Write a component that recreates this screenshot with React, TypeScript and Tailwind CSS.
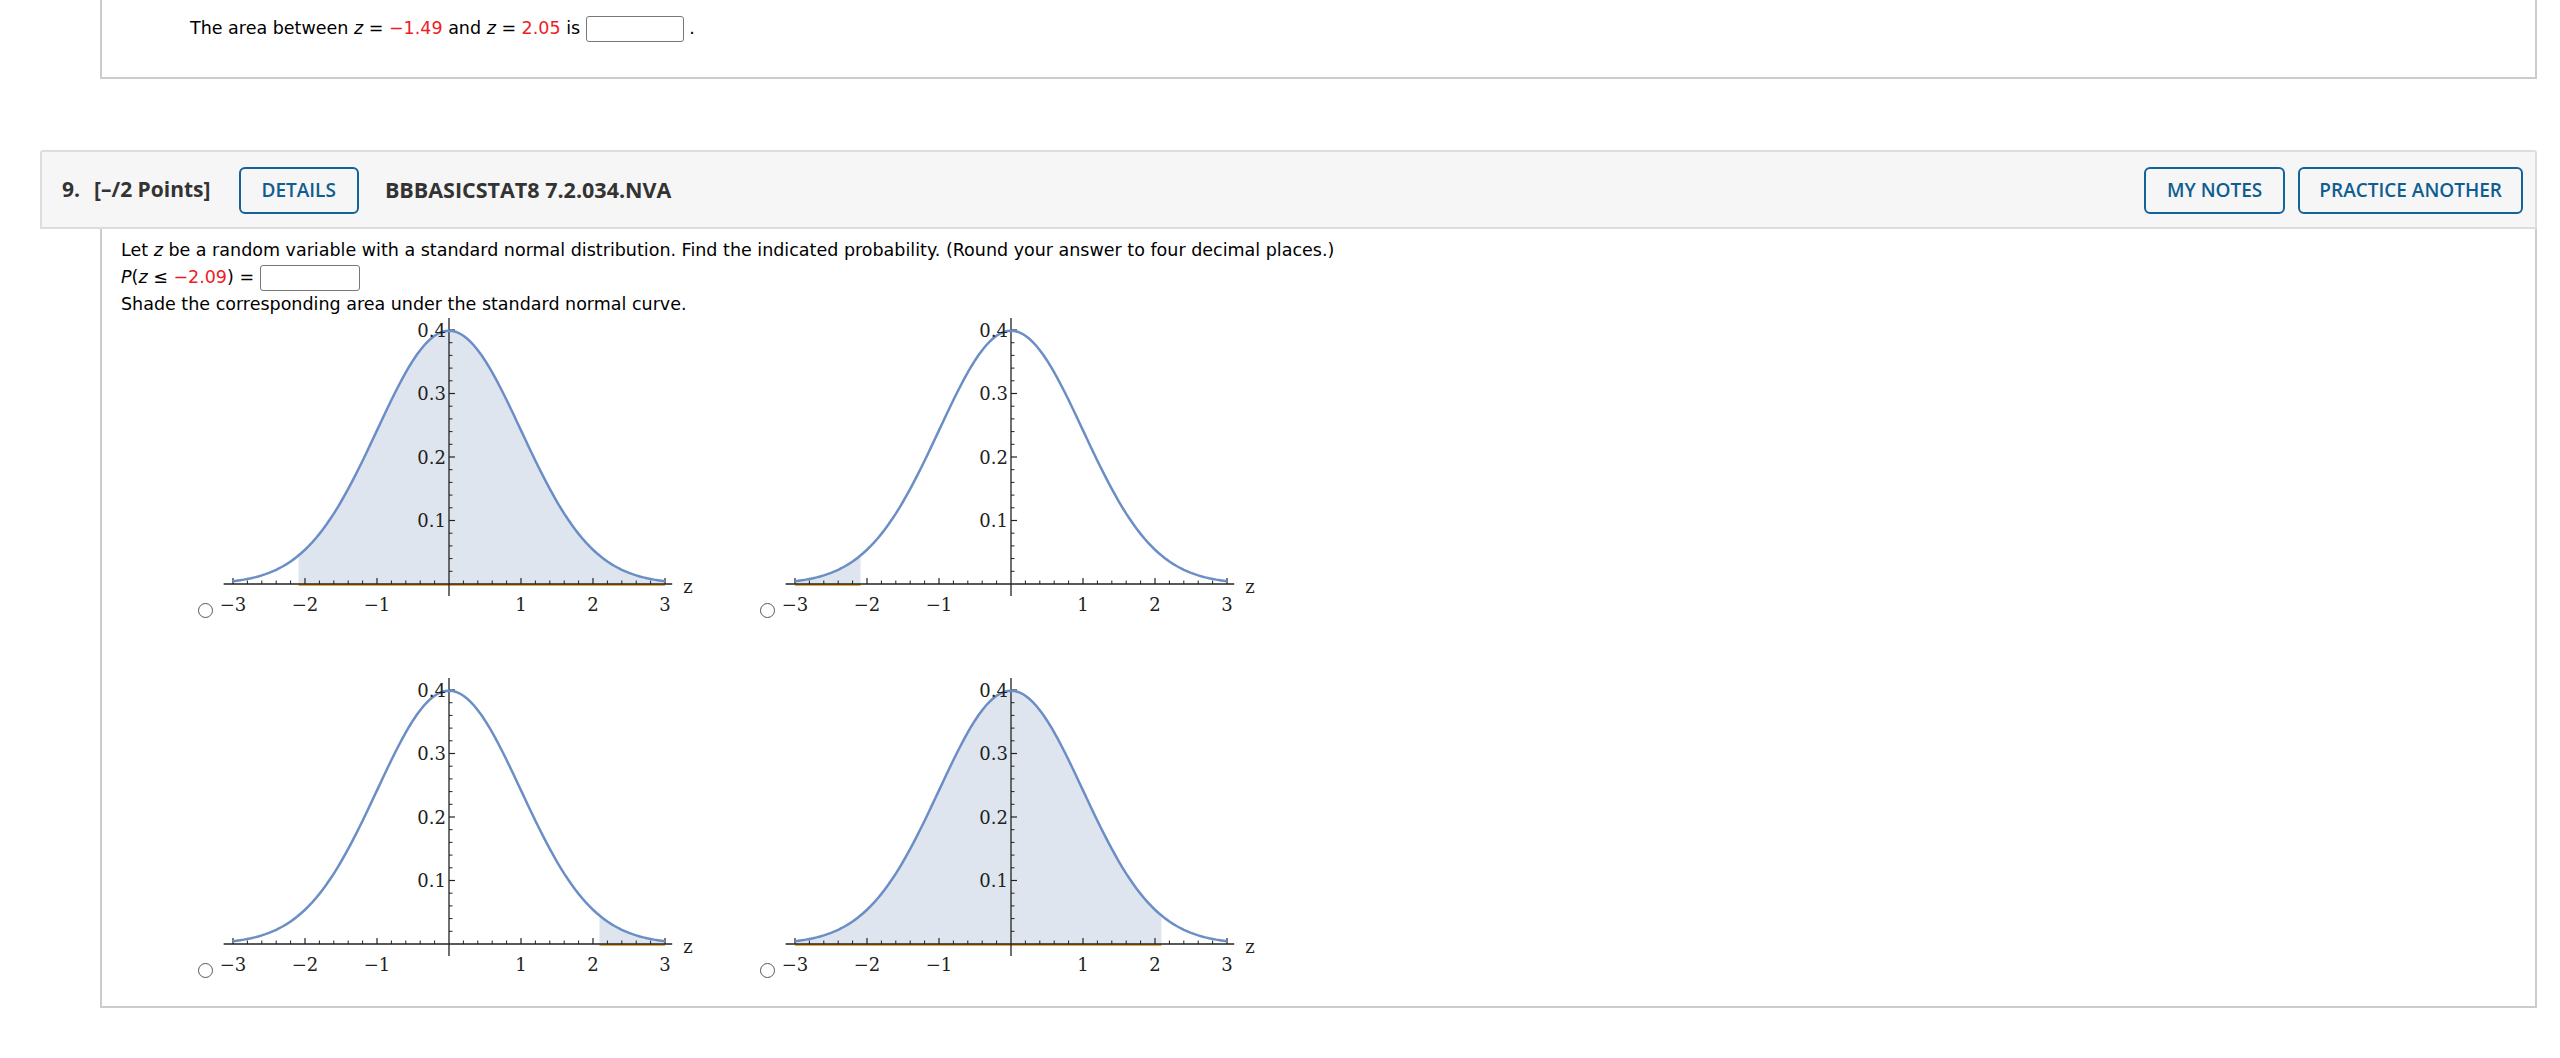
import React from 'react';

const UX = 72; // px per z unit
const UY = 635; // px per density unit (0.1 -> 63.5px)
const OX = 236;
const OY = 266;

function pdf(z: number) {
  return Math.exp((-z * z) / 2) / Math.sqrt(2 * Math.PI);
}

const px = (z: number) => OX + z * UX;
const py = (d: number) => OY - d * UY;

function curvePoints(a: number, b: number) {
  const pts: string[] = [];
  const n = 120;
  for (let i = 0; i <= n; i++) {
    const z = a + ((b - a) * i) / n;
    pts.push(`${px(z).toFixed(2)},${py(pdf(z)).toFixed(2)}`);
  }
  return pts;
}

function NormalChart({ from, to }: { from: number; to: number }) {
  const line = curvePoints(-3, 3);
  const area = curvePoints(from, to);
  const fillPath = `M${px(from)},${OY} L${area.join(' L')} L${px(to)},${OY} Z`;

  const xMinor: number[] = [];
  for (let i = -15; i <= 15; i++) {
    if (i % 5 !== 0) xMinor.push(i / 5);
  }
  const yMinor: number[] = [];
  for (let i = 1; i <= 21; i++) {
    if (i % 5 !== 0) yMinor.push(i / 50);
  }

  return (
    <svg width={520} height={320} className="block shrink-0">
      <path d={fillPath} fill="#dfe5ef" />
      {/* orange base under shaded part */}
      <line x1={px(from)} y1={OY + 1} x2={px(to)} y2={OY + 1} stroke="#e8a841" strokeWidth={2} />
      {/* x axis */}
      <line x1={px(-3.13)} y1={OY} x2={px(3.1)} y2={OY} stroke="#222" strokeWidth={1.3} />
      {[-3, -2, -1, 1, 2, 3].map((z) => (
        <line key={z} x1={px(z)} y1={OY} x2={px(z)} y2={OY - 6} stroke="#222" strokeWidth={1.2} />
      ))}
      {xMinor.map((z) => (
        <line key={z} x1={px(z)} y1={OY} x2={px(z)} y2={OY - 3.5} stroke="#222" strokeWidth={1} />
      ))}
      {/* y axis */}
      <line x1={OX} y1={OY - 266} x2={OX} y2={OY + 12} stroke="#222" strokeWidth={1.3} />
      {[0.1, 0.2, 0.3, 0.4].map((d) => (
        <line key={d} x1={OX} y1={py(d)} x2={OX + 6} y2={py(d)} stroke="#222" strokeWidth={1.2} />
      ))}
      {yMinor.map((d) => (
        <line key={d} x1={OX} y1={py(d)} x2={OX + 3.5} y2={py(d)} stroke="#222" strokeWidth={1} />
      ))}
      {/* curve */}
      <polyline points={line.join(' ')} fill="none" stroke="#6a8ec5" strokeWidth={2.5} />
      {/* labels */}
      <g fontFamily='"DejaVu Serif", "Liberation Serif", serif' fontSize={18} fill="#222">
        {[-3, -2, -1, 1, 2, 3].map((z) => (
          <text key={z} x={px(z)} y={OY + 27} textAnchor="middle">
            {z < 0 ? `\u2212${-z}` : z}
          </text>
        ))}
        {['0.1', '0.2', '0.3', '0.4'].map((t) => (
          <text key={t} x={OX - 3} y={py(parseFloat(t)) + 6.5} textAnchor="end">
            {t}
          </text>
        ))}
        <text x={px(3.32)} y={OY + 9} textAnchor="middle">
          z
        </text>
      </g>
    </svg>
  );
}

function Radio() {
  return (
    <span className="mb-[20px] inline-block h-[15px] w-[15px] shrink-0 rounded-full border-[1.5px] border-[#555555] bg-white" />
  );
}

function AnswerBox({ w }: { w: string }) {
  return (
    <span
      className={`inline-block h-[26px] ${w} rounded-[3px] border-[1.5px] border-[#777777] bg-white align-middle`}
    />
  );
}

const Red = ({ children }: { children: React.ReactNode }) => (
  <span className="text-[#ee1c25]">{children}</span>
);

export default function App() {
  const options = [
    { from: -2.09, to: 3 },
    { from: -3, to: -2.09 },
    { from: 2.09, to: 3 },
    { from: -3, to: 2.09 },
  ];

  return (
    <div className="min-h-screen bg-white text-[17.5px] leading-[27px] text-black [font-family:'DejaVu_Sans',Verdana,sans-serif]">
      {/* Previous question (scrolled) */}
      <div className="ml-[100px] mr-[23px] h-[79px] border-x-2 border-b-2 border-[#cccccc]">
        <p className="pl-[88px] pt-[15px]">
          The area between <i>z</i> = <Red>−1.49</Red> and <i>z</i> = <Red>2.05</Red> is{' '}
          <AnswerBox w="w-[98px]" /> .
        </p>
      </div>

      {/* Question 9 */}
      <div className="ml-[40px] mr-[23px] mt-[71px]">
        {/* Header */}
        <div className="flex h-[79px] items-center rounded-t-[3px] border-2 border-[#dddddd] bg-[#f6f6f6] pl-[20px] pr-[12px] [font-family:'Open_Sans',sans-serif]">
          <span className="text-[21px] font-bold text-[#333333]">9.</span>
          <span className="ml-[14px] text-[21px] font-bold text-[#333333]">[–/2 Points]</span>
          <button className="ml-[28px] mt-[2px] h-[47px] rounded-[6px] border-2 border-[#14629a] px-[21px] text-[19px] font-semibold text-[#0f5d91]">
            DETAILS
          </button>
          <span className="ml-[26px] text-[21.5px] font-bold text-[#333333]">BBBASICSTAT8 7.2.034.NVA</span>
          <div className="ml-auto mt-[2px] flex gap-[13px]">
            <button className="h-[47px] rounded-[6px] border-2 border-[#14629a] px-[21px] text-[19px] font-semibold text-[#0f5d91]">
              MY NOTES
            </button>
            <button className="h-[47px] rounded-[6px] border-2 border-[#14629a] px-[19px] text-[19px] font-semibold text-[#0f5d91]">
              PRACTICE ANOTHER
            </button>
          </div>
        </div>

        {/* Body */}
        <div className="ml-[60px] border-x-2 border-b-2 border-[#cccccc] pb-[8px] pl-[19px] pt-[8px]">
          <p>
            Let <i>z</i> be a random variable with a standard normal distribution. Find the indicated
            probability. (Round your answer to four decimal places.)
          </p>
          <p>
            <i>P</i>(<i>z</i> ≤ <Red>−2.09</Red>) = <AnswerBox w="w-[100px]" />
          </p>
          <p>Shade the corresponding area under the standard normal curve.</p>

          <div className="ml-[77px] grid grid-cols-[562px_562px] gap-y-[40px]">
            {options.map((o, i) => (
              <div key={i} className="flex items-end">
                <Radio />
                <NormalChart from={o.from} to={o.to} />
              </div>
            ))}
          </div>
        </div>
      </div>
    </div>
  );
}
